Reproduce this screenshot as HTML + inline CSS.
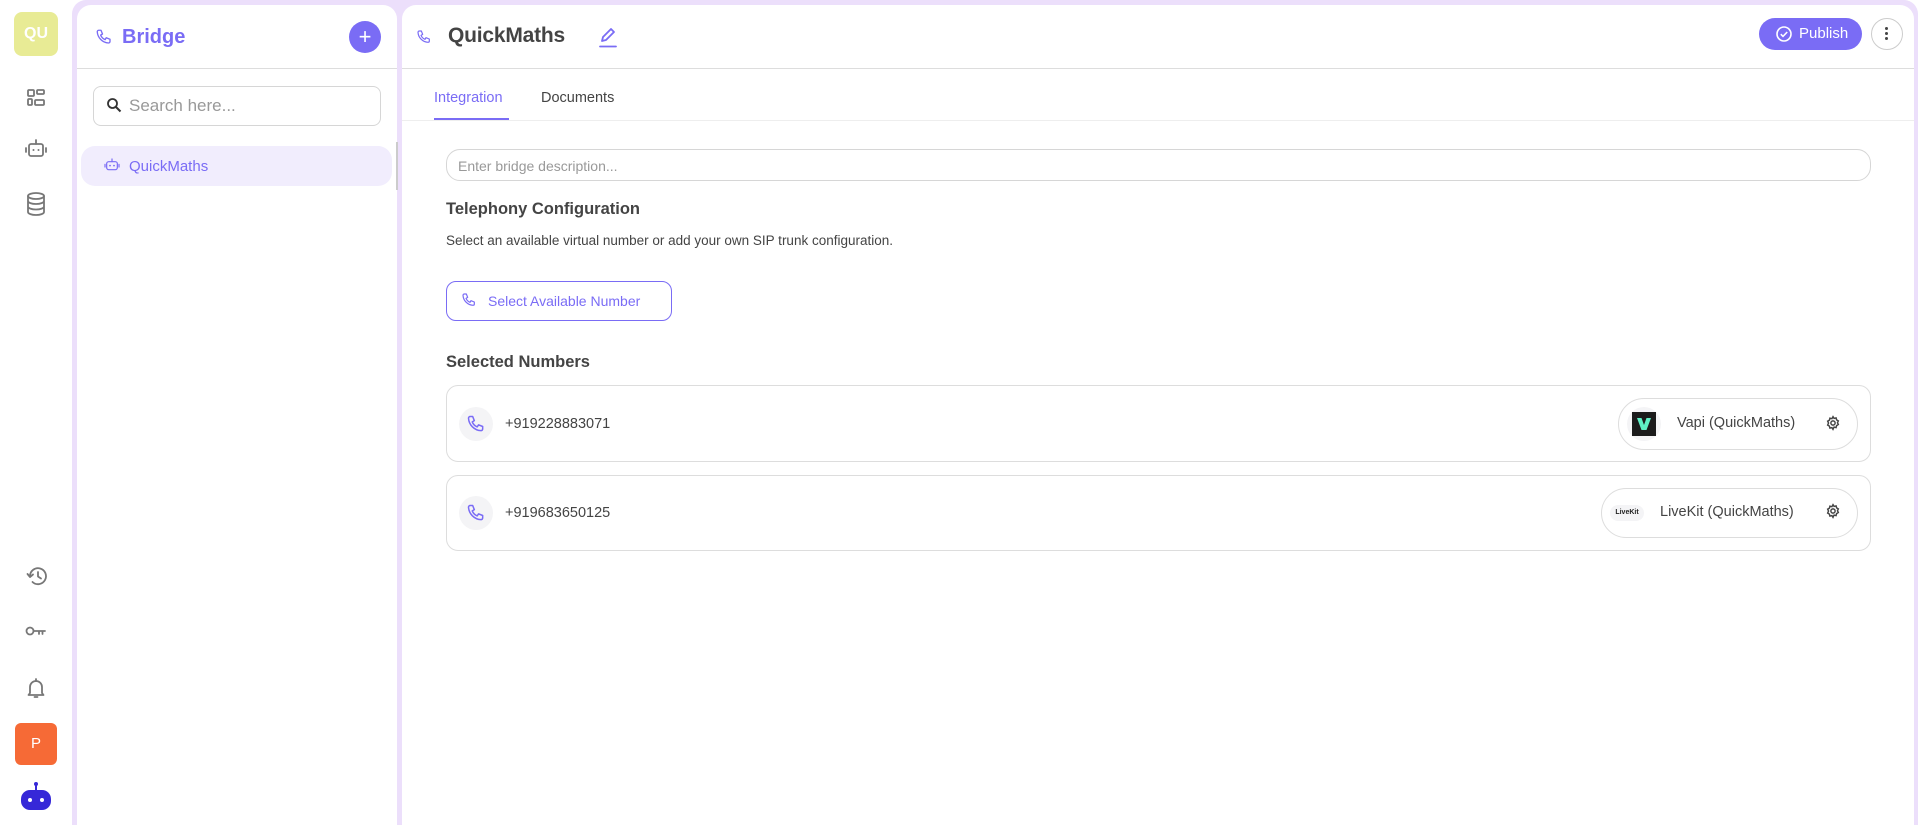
<!DOCTYPE html>
<html><head><meta charset="utf-8"><style>
*{box-sizing:border-box;margin:0;padding:0}
body{width:1918px;height:825px;overflow:hidden;background:#fff;font-family:"Liberation Sans",sans-serif;color:#333;position:relative}
.abs{position:absolute;white-space:nowrap}
.frame{left:72px;top:0;width:1846px;height:825px;background:#ecdffb;border-radius:14px 14px 0 0}
.card{background:#fff;border-radius:14px 14px 0 0}
.ic{stroke:#777;fill:none;stroke-width:1.8;stroke-linecap:round;stroke-linejoin:round}
.pc{stroke:#7a6cf5;fill:none;stroke-width:1.8;stroke-linecap:round;stroke-linejoin:round}
.pill{border:1px solid #ddd;border-radius:26px;background:#fff}
</style></head><body>
<div class="abs" style="left:14px;top:12px;width:44px;height:44px;background:#e8eb95;border-radius:8px;color:#fff;font-weight:bold;font-size:16px;text-align:center;line-height:44px">QU</div>
<svg class="abs" style="left:26px;top:88px" width="20" height="20" viewBox="0 0 20 20"><g class="ic" stroke-width="1.5"><rect x="2" y="2" width="6" height="6" rx="1"/><rect x="11" y="2" width="7" height="4" rx="1"/><rect x="2" y="11" width="4" height="6" rx="1"/><rect x="9" y="12" width="9" height="5" rx="1"/></g></svg>
<svg class="abs" style="left:24px;top:138px" width="24" height="22" viewBox="0 0 24 22"><g class="ic" stroke-width="1.6"><rect x="5" y="6" width="14" height="12" rx="2"/><path d="M12 2v4M2 10v4M22 10v4"/></g><circle cx="9.5" cy="12" r="1" fill="#777"/><circle cx="14.5" cy="12" r="1" fill="#777"/></svg>
<svg class="abs" style="left:26px;top:192px" width="20" height="24" viewBox="0 0 20 24"><g class="ic" stroke-width="1.5"><ellipse cx="10" cy="4" rx="8" ry="3"/><path d="M2 4v16c0 1.7 3.6 3 8 3s8-1.3 8-3V4M2 9c0 1.7 3.6 3 8 3s8-1.3 8-3M2 14.5c0 1.7 3.6 3 8 3s8-1.3 8-3"/></g></svg>
<svg class="abs" style="left:26px;top:566px" width="22" height="20" viewBox="0 0 22 20"><g class="ic" stroke-width="1.6"><path d="M4 10a8 8 0 1 1 2.5 6"/><path d="M1.5 8l2.5 3 3-2.5"/><path d="M12 6v4.5l3 2"/></g></svg>
<svg class="abs" style="left:25px;top:624px" width="22" height="14" viewBox="0 0 22 14"><g class="ic" stroke-width="1.8"><circle cx="5" cy="7" r="3.5"/><path d="M8.5 7H20M14 7v3M17.5 7v3"/></g></svg>
<svg class="abs" style="left:27px;top:677px" width="18" height="22" viewBox="0 0 18 22"><g class="ic" stroke-width="1.6"><path d="M3 16V10a6 6 0 0 1 12 0v6l1.5 2H1.5z"/><path d="M9 2v2M7.5 20h3"/></g></svg>
<div class="abs" style="left:15px;top:723px;width:42px;height:42px;background:#f66a36;border-radius:6px;color:#fff;font-size:15px;text-align:center;line-height:42px">P</div>
<svg class="abs" style="left:19px;top:780px" width="34" height="34" viewBox="0 0 34 34"><circle cx="17" cy="4" r="2" fill="#3628d8"/><path d="M17 5v5" stroke="#3628d8" stroke-width="2"/><rect x="2" y="10" width="30" height="20" rx="9" fill="#3628d8"/><circle cx="11" cy="20" r="2" fill="#fff"/><circle cx="23" cy="20" r="2" fill="#fff"/></svg>

<div class="abs frame"></div>
<div class="abs card" style="left:77px;top:5px;width:320px;height:820px"></div>
<svg class="abs" style="left:95px;top:28px" width="18" height="18" viewBox="0 0 24 24"><path class="pc" stroke-width="2.2" d="M5 3h3l2 5-2.5 1.5a11 11 0 0 0 6 6L15 13l5 2v3a2 2 0 0 1-2 2A16 16 0 0 1 3 5a2 2 0 0 1 2-2"/></svg>
<div class="abs" style="left:122px;top:26px;font-size:20px;font-weight:bold;color:#7a6cf5">Bridge</div>
<div class="abs" style="left:349px;top:21px;width:32px;height:32px;border-radius:50%;background:#7a6cf5;color:#fff;font-size:22px;text-align:center;line-height:31px">+</div>
<div class="abs" style="left:77px;top:68px;width:320px;height:1px;background:#ddd"></div>
<div class="abs" style="left:93px;top:86px;width:288px;height:40px;border:1px solid #d6d6d6;border-radius:8px"></div>
<svg class="abs" style="left:106px;top:97px" width="16" height="16" viewBox="0 0 16 16"><circle cx="6.5" cy="6.5" r="4.5" stroke="#333" stroke-width="1.8" fill="none"/><path d="M10 10l4.5 4.5" stroke="#333" stroke-width="2"/></svg>
<div class="abs" style="left:129px;top:96px;font-size:17px;color:#999">Search here...</div>
<div class="abs" style="left:81px;top:146px;width:311px;height:40px;background:#f1edfd;border-radius:14px"></div>
<svg class="abs" style="left:104px;top:157px" width="16" height="16" viewBox="0 0 24 24"><g class="pc" stroke-width="2"><rect x="4" y="7" width="16" height="12" rx="3"/><path d="M12 3v4M1.5 11v4M22.5 11v4"/></g><circle cx="9" cy="13" r="1.3" fill="#7a6cf5"/><circle cx="15" cy="13" r="1.3" fill="#7a6cf5"/></svg>
<div class="abs" style="left:129px;top:158px;font-size:15px;color:#7a6cf5">QuickMaths</div>
<div class="abs" style="left:396px;top:142px;width:2px;height:48px;background:#ccc"></div>

<div class="abs card" style="left:402px;top:5px;width:1512px;height:820px"></div>
<svg class="abs" style="left:416px;top:29px" width="16" height="16" viewBox="0 0 24 24"><path class="pc" stroke-width="2.2" d="M5 3h3l2 5-2.5 1.5a11 11 0 0 0 6 6L15 13l5 2v3a2 2 0 0 1-2 2A16 16 0 0 1 3 5a2 2 0 0 1 2-2"/></svg>
<div class="abs" style="left:448px;top:24px;font-size:21px;font-weight:bold;color:#444;letter-spacing:-0.2px">QuickMaths</div>
<svg class="abs" style="left:598px;top:26px" width="20" height="22" viewBox="0 0 20 22"><path class="pc" d="M4 15l1-4 8-8 3 3-8 8zM2 20.5h16"/></svg>
<div class="abs" style="left:1759px;top:18px;width:103px;height:32px;background:#7a6cf5;border-radius:16px;color:#fff;font-size:15px;line-height:32px;padding-left:40px">Publish</div>
<svg class="abs" style="left:1775px;top:25px" width="18" height="18" viewBox="0 0 18 18"><circle cx="9" cy="9" r="7" stroke="#fff" stroke-width="1.6" fill="none"/><path d="M5.8 9.2l2.2 2.2 4.2-4.4" stroke="#fff" stroke-width="1.6" fill="none"/></svg>
<div class="abs" style="left:1871px;top:18px;width:32px;height:32px;border:1px solid #ccc;border-radius:50%"></div>
<div class="abs" style="left:1885px;top:27px;width:3px;height:3px;background:#444;border-radius:50%;box-shadow:0 5px 0 #444,0 10px 0 #444"></div>
<div class="abs" style="left:402px;top:68px;width:1512px;height:1px;background:#ddd"></div>
<div class="abs" style="left:434px;top:90px;font-size:14.5px;color:#7a6cf5">Integration</div>
<div class="abs" style="left:541px;top:90px;font-size:14.5px;color:#444">Documents</div>
<div class="abs" style="left:402px;top:120px;width:1512px;height:1px;background:#eee"></div>
<div class="abs" style="left:434px;top:118px;width:75px;height:2px;background:#7a6cf5"></div>
<div class="abs" style="left:446px;top:149px;width:1425px;height:32px;border:1px solid #d6d6d6;border-radius:14px;font-size:14px;color:#999;padding:8px 0 0 11px">Enter bridge description...</div>
<div class="abs" style="left:446px;top:200px;font-size:16.5px;font-weight:bold;color:#444">Telephony Configuration</div>
<div class="abs" style="left:446px;top:233px;font-size:13.5px;color:#444">Select an available virtual number or add your own SIP trunk configuration.</div>
<div class="abs" style="left:446px;top:281px;width:226px;height:40px;border:1.5px solid #7a6cf5;border-radius:10px;font-size:14px;color:#7a6cf5;padding:11px 0 0 41px">Select Available Number</div>
<svg class="abs" style="left:461px;top:292px" width="16" height="16" viewBox="0 0 24 24"><path class="pc" stroke-width="2" d="M5 3h3l2 5-2.5 1.5a11 11 0 0 0 6 6L15 13l5 2v3a2 2 0 0 1-2 2A16 16 0 0 1 3 5a2 2 0 0 1 2-2"/></svg>
<div class="abs" style="left:446px;top:353px;font-size:16.5px;font-weight:bold;color:#444">Selected Numbers</div>

<div class="abs" style="left:446px;top:385px;width:1425px;height:77px;border:1px solid #ddd;border-radius:12px"></div>
<div class="abs" style="left:459px;top:407px;width:34px;height:34px;border-radius:50%;background:#f4f4f6"></div>
<svg class="abs" style="left:466px;top:414px" width="20" height="20" viewBox="0 0 24 24"><path class="pc" stroke-width="2.4" d="M5 3h3l2 5-2.5 1.5a11 11 0 0 0 6 6L15 13l5 2v3a2 2 0 0 1-2 2A16 16 0 0 1 3 5a2 2 0 0 1 2-2"/></svg>
<div class="abs" style="left:505px;top:416px;font-size:14.5px;color:#444">+919228883071</div>
<div class="abs pill" style="left:1618px;top:398px;width:240px;height:52px"></div>
<div class="abs" style="left:1627px;top:407px;width:34px;height:34px;border-radius:50%;background:#f4f4f6"></div>
<div class="abs" style="left:1632px;top:412px;width:24px;height:24px;background:#1b1b1b"></div>
<svg class="abs" style="left:1635px;top:415px" width="18" height="18" viewBox="0 0 18 18"><path d="M2 3h4.5L9 10l2.5-7H16l-4.5 12h-5z" fill="#5ff0c5"/></svg>
<div class="abs" style="left:1677px;top:415px;font-size:14.5px;color:#444">Vapi (QuickMaths)</div>
<svg class="abs" style="left:1825px;top:415px" width="16" height="16" viewBox="0 0 24 24"><g fill="none" stroke="#444" stroke-width="2.2"><circle cx="12" cy="12" r="3.2"/><path d="M12 2.5l1.6 2.6 3-.8.8 3 2.6 1.6-1.3 2.7 1.3 2.7-2.6 1.6-.8 3-3-.8L12 21.5l-1.6-2.6-3 .8-.8-3-2.6-1.6L5.3 12 4 9.3l2.6-1.6.8-3 3 .8z"/></g></svg>

<div class="abs" style="left:446px;top:475px;width:1425px;height:76px;border:1px solid #ddd;border-radius:12px"></div>
<div class="abs" style="left:459px;top:496px;width:34px;height:34px;border-radius:50%;background:#f4f4f6"></div>
<svg class="abs" style="left:466px;top:503px" width="20" height="20" viewBox="0 0 24 24"><path class="pc" stroke-width="2.4" d="M5 3h3l2 5-2.5 1.5a11 11 0 0 0 6 6L15 13l5 2v3a2 2 0 0 1-2 2A16 16 0 0 1 3 5a2 2 0 0 1 2-2"/></svg>
<div class="abs" style="left:505px;top:505px;font-size:14.5px;color:#444">+919683650125</div>
<div class="abs pill" style="left:1601px;top:488px;width:257px;height:50px"></div>
<div class="abs" style="left:1610px;top:505px;width:34px;height:16px;border-radius:8px;background:#f4f4f6;font-size:7px;color:#222;text-align:center;line-height:16px;font-weight:bold">LiveKit</div>
<div class="abs" style="left:1660px;top:504px;font-size:14.5px;color:#444">LiveKit (QuickMaths)</div>
<svg class="abs" style="left:1825px;top:503px" width="16" height="16" viewBox="0 0 24 24"><g fill="none" stroke="#444" stroke-width="2.2"><circle cx="12" cy="12" r="3.2"/><path d="M12 2.5l1.6 2.6 3-.8.8 3 2.6 1.6-1.3 2.7 1.3 2.7-2.6 1.6-.8 3-3-.8L12 21.5l-1.6-2.6-3 .8-.8-3-2.6-1.6L5.3 12 4 9.3l2.6-1.6.8-3 3 .8z"/></g></svg>
</body></html>
